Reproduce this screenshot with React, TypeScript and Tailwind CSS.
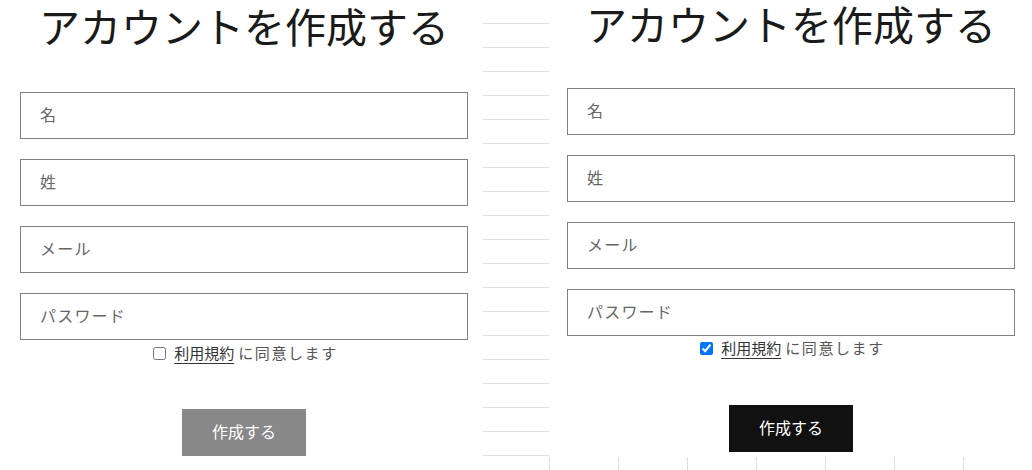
import React from 'react';

const fields = ['名', '姓', 'メール', 'パスワード'];

function SignupForm({ checked, dark, focusFirst, titleH, rowMt, btnMt }: {
  checked: boolean;
  dark: boolean;
  focusFirst: boolean;
  titleH: string;
  rowMt: string;
  btnMt: string;
}) {
  return (
    <div className="flex flex-col items-center w-full">
      <h1 className={`${titleH} text-[41px] font-normal text-[#1a1a1a] whitespace-nowrap`}>アカウントを作成する</h1>
      <div className="mt-[42px] w-full flex flex-col gap-5">
        {fields.map((f, i) => (
          <input
            key={f}
            type="text"
            placeholder={f}
            className={`h-[47px] w-full border border-[#808080] bg-white pl-[19px] pb-[3px] text-base tracking-[1.2px] text-[#333] placeholder:text-[#666] outline-none ${
              focusFirst && i === 0 ? 'outline-1 outline-[#dddddd]' : ''
            }`}
          />
        ))}
      </div>
      <label className={`${rowMt} flex items-center h-[22px] text-[15px] leading-[22px] pl-[3px]`}>
        <input
          type="checkbox"
          defaultChecked={checked}
          className="m-0 w-[13px] h-[13px] accent-[#0075ff]"
        />
        <a className="ml-[8px] text-[#333] underline decoration-[#333] underline-offset-[4px]">利用規約</a>
        <span className="ml-[4px] text-[#555] tracking-[1.6px]">に同意します</span>
      </label>
      <button
        className={`${btnMt} h-[47px] w-[124px] pb-[3px] text-base text-white ${dark ? 'bg-[#111111]' : 'bg-[#888888]'}`}
      >
        作成する
      </button>
    </div>
  );
}

export default function App() {
  return (
    <div
      className="flex w-[1032px] h-[470px] overflow-hidden bg-white"
      style={{ fontFamily: '"Noto Sans CJK JP", "Noto Sans", sans-serif' }}
    >
      <div className="w-[483px] shrink-0 pl-5 pr-[15px]">
        <SignupForm checked={false} dark={false} focusFirst={false} titleH="leading-[50px]" rowMt="mt-[2px]" btnMt="mt-[45px]" />
      </div>

      <div className="w-[66px] shrink-0 flex flex-col">
        {Array.from({ length: 19 }).map((_, i) => (
          <div key={i} className="h-6 shrink-0 border-b border-[#e0e0e0]" />
        ))}
      </div>

      <div className="w-[483px] shrink-0 flex flex-col">
        <div className="pl-[18px] pr-[17px]">
          <SignupForm checked={true} dark={true} focusFirst={true} titleH="leading-[46px]" rowMt="mt-[1px]" btnMt="mt-[46px]" />
        </div>
        <div className="mt-[5px] flex">
          {Array.from({ length: 7 }).map((_, i) => (
            <div key={i} className="w-[69px] h-[20px] shrink-0 border-l border-[#dddddd]" />
          ))}
        </div>
      </div>
    </div>
  );
}
